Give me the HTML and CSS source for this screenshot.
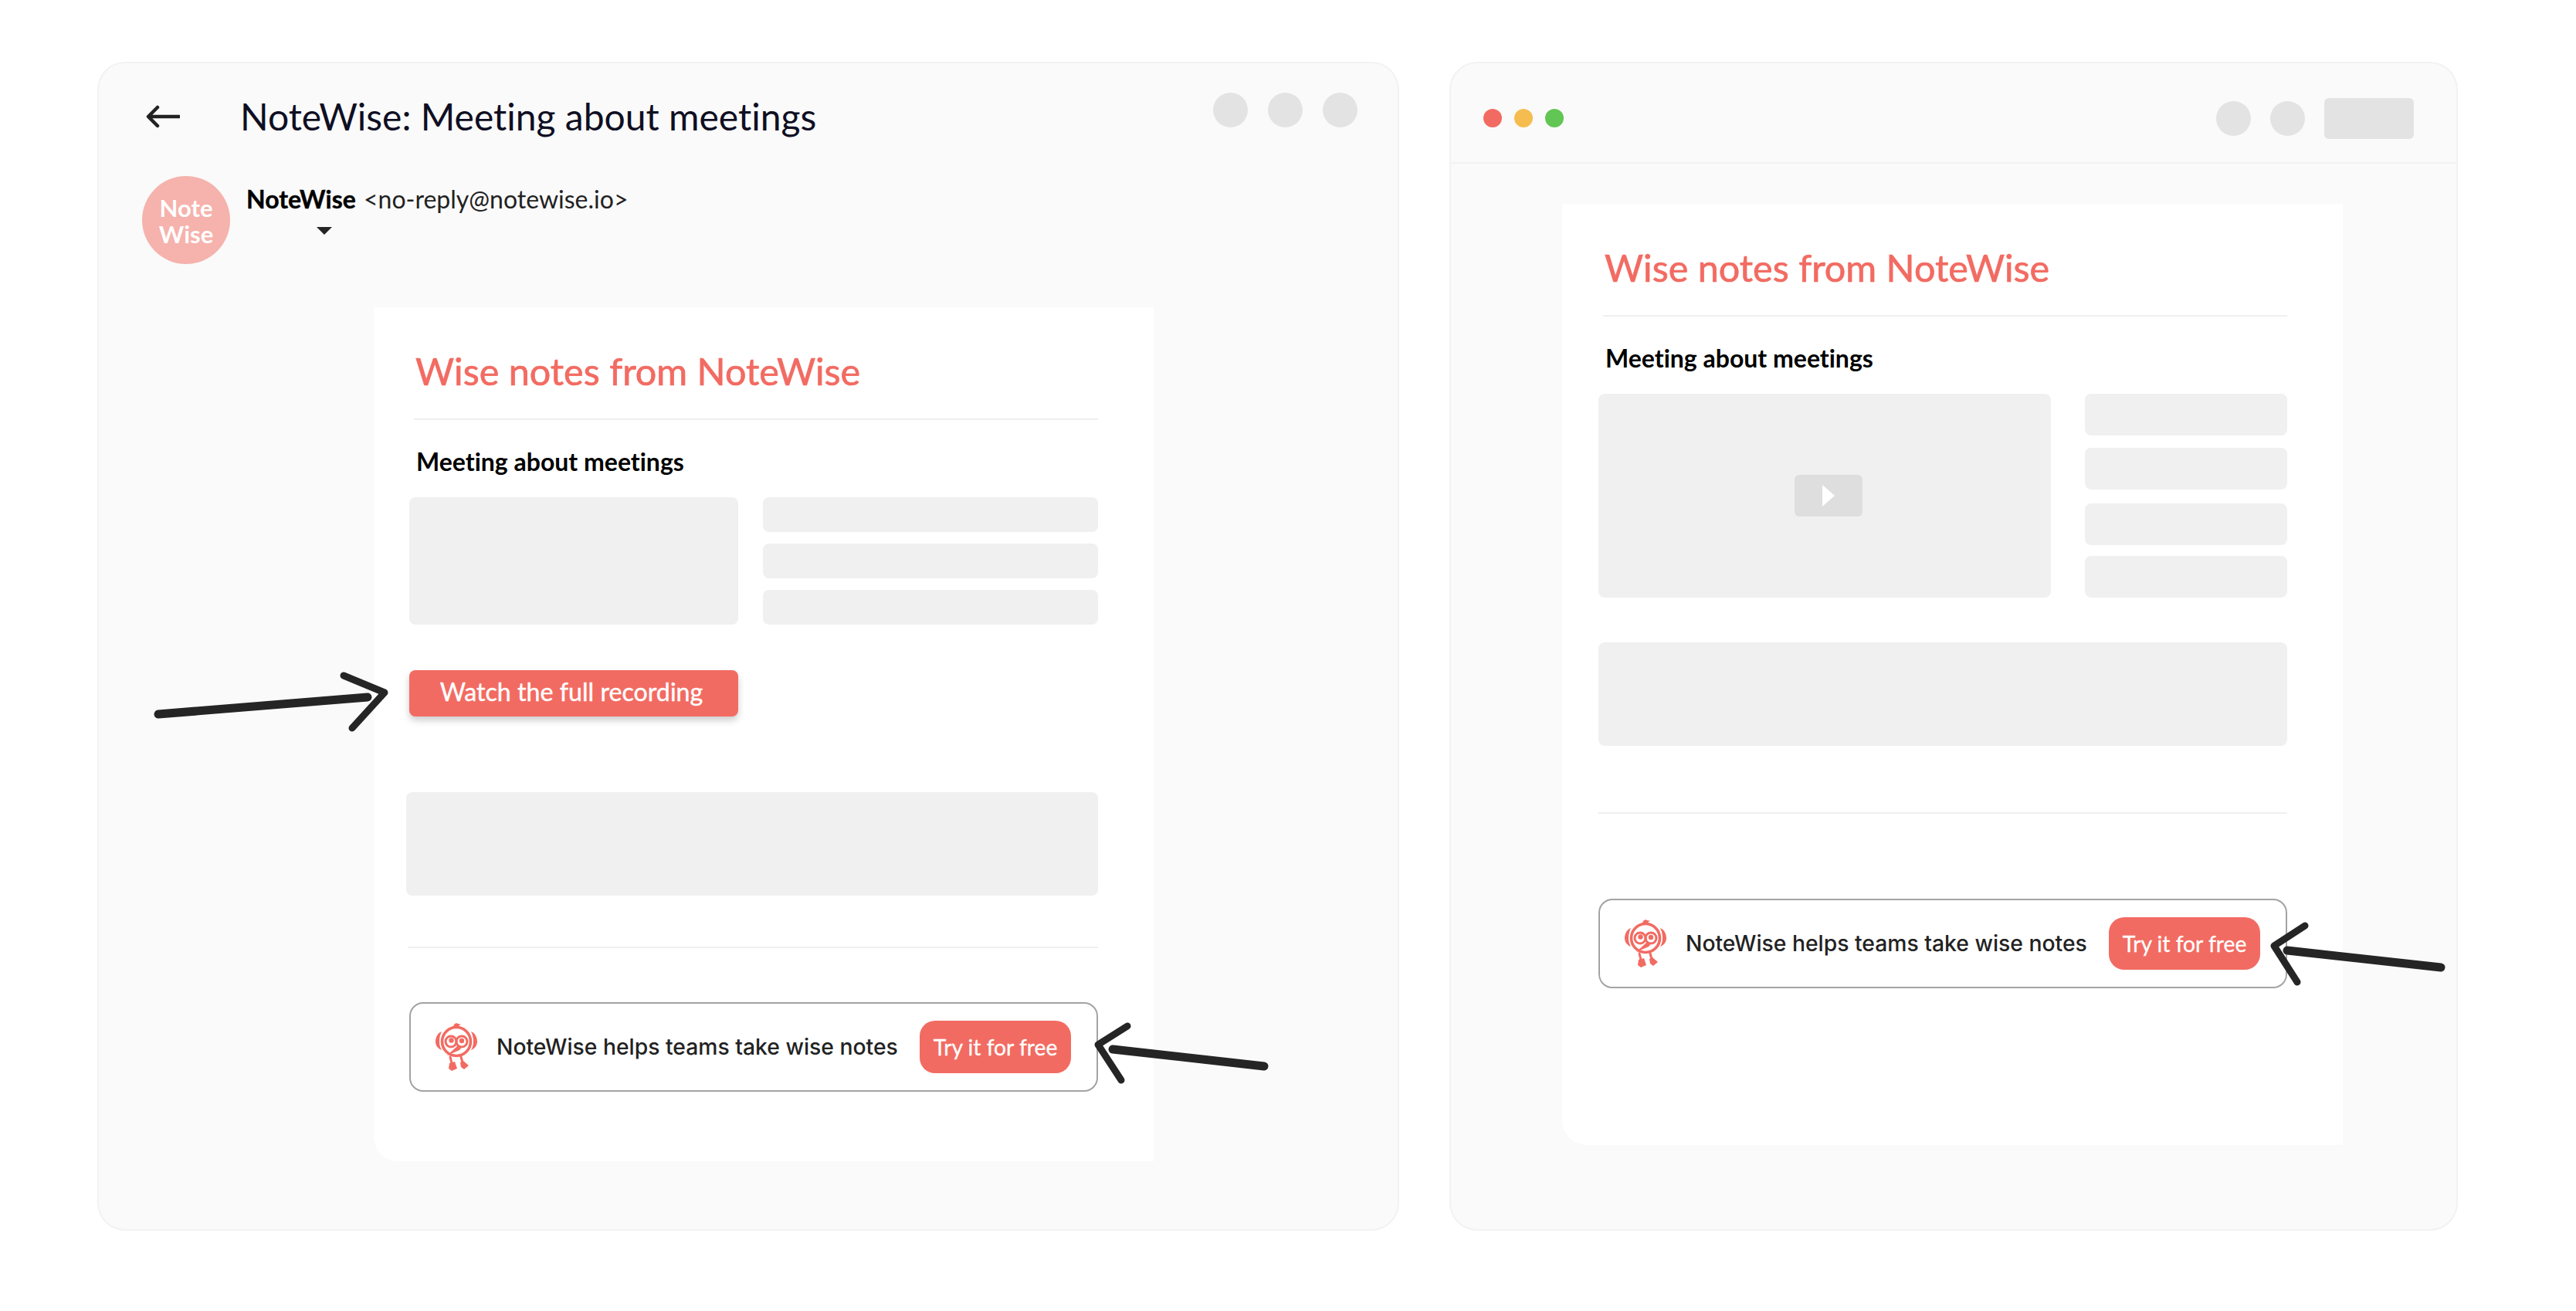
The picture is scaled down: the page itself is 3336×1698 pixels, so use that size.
FILE: index.html
```html
<!doctype html>
<html lang="en">
<head>
    <meta charset="UTF-8">
    <link rel="stylesheet" href="styles.css">
    <title>NoteWise</title>
</head>
<body>
<div class="window window-mail">
    <div class="mail-top">
        <svg class="back" width="44" height="30" viewBox="0 0 44 30">
            <path d="M43 15H4M15 3L3 15l12 12" fill="none" stroke="#222" stroke-width="4.5" stroke-linecap="round" stroke-linejoin="round"/>
        </svg>
        <h1 class="mail-title">NoteWise: Meeting about meetings</h1>
        <div class="mail-dots">
            <span class="dot"></span>
            <span class="dot"></span>
            <span class="dot"></span>
        </div>
    </div>
    <div class="sender">
        <div class="avatar">Note<br>Wise</div>
        <div class="sender-info">
            <div class="sender-line"><b>NoteWise</b> &lt;no-reply@notewise.io&gt;</div>
            <div class="caret"></div>
        </div>
    </div>
    <div class="page page-mail">
        <h2 class="page-title">Wise notes from NoteWise</h2>
        <h3 class="page-sub">Meeting about meetings</h3>
        <div class="media media-mail">
            <div class="block video"></div>
            <div class="rows">
                <div class="block"></div>
                <div class="block"></div>
                <div class="block"></div>
            </div>
        </div>
        <div class="watch-row"><button class="watch">Watch the full recording</button></div>
        <div class="block long"></div>
        <div class="rule"></div>
        <div class="banner">
            <svg class="owl" width="54" height="62" viewBox="0 0 54 62">
                <use href="#owl-mark"/>
            </svg>
            <span class="banner-text">NoteWise helps teams take wise notes</span>
            <button class="try">Try it for free</button>
        </div>
    </div>
</div>

<div class="window window-app">
    <div class="app-bar">
        <div class="lights">
            <span class="light red"></span>
            <span class="light yellow"></span>
            <span class="light green"></span>
        </div>
        <div class="app-tools">
            <span class="dot"></span>
            <span class="dot"></span>
            <span class="tool-rect"></span>
        </div>
    </div>
    <div class="page page-app">
        <h2 class="page-title">Wise notes from NoteWise</h2>
        <h3 class="page-sub">Meeting about meetings</h3>
        <div class="media media-app">
            <div class="block video">
                <div class="play"><span class="play-tri"></span></div>
            </div>
            <div class="rows">
                <div class="block"></div>
                <div class="block"></div>
                <div class="block"></div>
                <div class="block"></div>
            </div>
        </div>
        <div class="block long"></div>
        <div class="rule"></div>
        <div class="banner">
            <svg class="owl" width="54" height="62" viewBox="0 0 54 62">
                <use href="#owl-mark"/>
            </svg>
            <span class="banner-text">NoteWise helps teams take wise notes</span>
            <button class="try">Try it for free</button>
        </div>
    </div>
</div>

<svg class="defs" width="0" height="0">
    <g id="owl-mark" fill="none" stroke="#f26b62" stroke-linecap="round" stroke-linejoin="round">
        <circle cx="27" cy="24" r="18.5" stroke-width="3.6"/>
        <path d="M8 11C2 13 0 20 0 24c0 5 3 9 8 11-2-3-3-7-3-11 0-5 1-9 3-13zM46 11c6 2 8 9 8 13 0 5-3 9-8 11 2-3 3-7 3-11 0-5-1-9-3-13z" fill="#f26b62" stroke="none"/>
        <path d="M23 6c0-3 1-5 4-6 1 1 3 1 7 2-3 0-4 1-4 4z" fill="#f26b62" stroke="none"/>
        <circle cx="20" cy="24" r="7" stroke-width="3"/>
        <circle cx="34" cy="24" r="7" stroke-width="3"/>
        <circle cx="20.5" cy="22.5" r="3.2" fill="#f26b62" stroke="none"/>
        <circle cx="34" cy="23" r="3.2" fill="#f26b62" stroke="none"/>
        <path d="M15 42L28 30c2-1 5-1 5 1 0 3-2 4-4 5z" fill="#f26b62" stroke="none"/>
        <path d="M19 44l2 8M33 44l2 7" stroke-width="3"/>
        <path d="M18 52l7-2 3 9-7 3-4-3zM32 51l4-2 7 6-6 5-4-3z" fill="#f26b62" stroke="none"/>
    </g>
</svg>

<svg class="arrows" width="3336" height="1698" viewBox="0 0 3336 1698">
    <g fill="none" stroke="#252525" stroke-linecap="round" stroke-linejoin="round">
        <path d="M205 925L476 903" stroke-width="11"/>
        <path d="M445 875L498 897L456 943" stroke-width="9"/>
        <path d="M1441 1359L1637 1381" stroke-width="11"/>
        <path d="M1460 1329L1422 1353L1452 1399" stroke-width="9"/>
        <path d="M2962 1231L3161 1253" stroke-width="11"/>
        <path d="M2985 1199L2945 1225L2975 1272" stroke-width="9"/>
    </g>
</svg>
</body>
</html>
```
FILE: styles.css
```css
* {
    box-sizing: border-box;
}

body {
    display: flex;
    align-items: flex-start;
    gap: 65px;
    margin: 0;
    padding: 80px 0 0 126px;
    width: 3336px;
    height: 1698px;
    overflow: hidden;
    background-color: #fff;
    font-family: Lato, sans-serif;
    font-variant-ligatures: none;
    position: relative;
}

h1, h2, h3 {
    margin: 0;
    font-weight: 400;
}

button {
    border: none;
    color: #fff;
    font-family: Lato, sans-serif;
    font-variant-ligatures: none;
}

.window {
    height: 1514px;
    background-color: #fafafa;
    border: 2px solid #f2f2f2;
    border-radius: 36px;
}

.window-mail {
    width: 1686px;
}

.window-app {
    width: 1306px;
}

.mail-top {
    display: flex;
    align-items: center;
    height: 96px;
    padding: 41px 52px 0 61px;
}

.back {
    flex-shrink: 0;
}

.mail-title {
    margin-left: 78px;
    font-size: 48px;
    color: #0f0f23;
}

.mail-dots {
    display: flex;
    gap: 26px;
    margin-left: auto;
    margin-top: -16px;
}

.dot {
    display: block;
    width: 45px;
    height: 45px;
    border-radius: 50%;
    background-color: #e3e3e3;
}

.sender {
    display: flex;
    align-items: flex-start;
    margin: 50px 0 0 56px;
}

.avatar {
    width: 114px;
    height: 114px;
    padding-top: 24px;
    border-radius: 50%;
    background-color: #f6b2ac;
    color: #fff;
    font-size: 31px;
    font-weight: 700;
    line-height: 34px;
    text-align: center;
}

.sender-info {
    margin: 10px 0 0 21px;
}

.sender-line {
    font-size: 32px;
    line-height: 40px;
    color: #222;
}

.sender-line b {
    margin-right: 2px;
    color: #000;
    -webkit-text-stroke: .4px #000;
}

.caret {
    width: 0;
    height: 0;
    margin: 16px 0 0 91px;
    border-left: 10px solid transparent;
    border-right: 10px solid transparent;
    border-top: 10px solid #252525;
}

.page {
    background-color: #fff;
    border-radius: 0 0 0 32px;
}

.page-mail {
    width: 1010px;
    height: 1106px;
    margin: 56px 0 0 356px;
    padding: 51px 72px 0 46px;
}

.page-app {
    width: 1011px;
    height: 1219px;
    margin: 52px 0 0 144px;
    padding: 51px 72px 0 47px;
}

/* no medium cut of Lato here, a thin stroke brings the weight up */
.page-title {
    margin-left: 6px;
    padding: 0 0 31px 2px;
    font-size: 48.5px;
    line-height: 62px;
    color: #f26b62;
    -webkit-text-stroke: .7px #f26b62;
    border-bottom: 2px solid #efefef;
}

.page-sub {
    padding: 33px 0 0 9px;
    font-size: 32px;
    line-height: 42px;
    font-weight: 700;
    color: #000;
    white-space: nowrap;
}

.block {
    background-color: #f0f0f0;
    border-radius: 8px;
}

.media {
    display: flex;
    margin-top: 25px;
}

.media-mail {
    gap: 32px;
    height: 165px;
}

.media-mail .video {
    width: 426px;
}

.media-app {
    gap: 44px;
    height: 264px;
}

.media-app .video {
    display: flex;
    justify-content: center;
    align-items: center;
    width: 586px;
}

.rows {
    display: flex;
    flex: 1;
    flex-direction: column;
    justify-content: space-between;
}

.rows .block {
    height: 45px;
}

.media-app .rows .block {
    height: 54px;
}

/* the third row sits a little low in the reference */
.media-app .rows .block:nth-child(3) {
    margin-top: 2px;
    margin-bottom: -2px;
}

.play {
    display: flex;
    justify-content: center;
    align-items: center;
    width: 88px;
    height: 54px;
    margin-left: 10px;
    border-radius: 6px;
    background-color: #dedede;
}

.play-tri {
    width: 0;
    height: 0;
    border-top: 14px solid transparent;
    border-bottom: 14px solid transparent;
    border-left: 16px solid #fff;
}

.watch-row {
    margin-top: 59px;
}

.watch {
    display: block;
    width: 426px;
    height: 60px;
    padding: 0 6px 5px 0;
    border-radius: 8px;
    background-color: #f26b62;
    font-size: 32.2px;
    -webkit-text-stroke: .4px #fff;
    box-shadow: 0 5px 10px rgba(0, 0, 0, .2);
}

.long {
    height: 134px;
}

.page-mail .long {
    margin: 98px 0 0 -4px;
}

.page-app .long {
    margin-top: 58px;
}

.rule {
    height: 2px;
    background-color: #efefef;
}

.page-mail .rule {
    margin: 66px 0 0 -2px;
}

.page-app .rule {
    margin-top: 86px;
}

.banner {
    display: flex;
    align-items: center;
    height: 116px;
    padding: 0 33px 0 32px;
    border: 2px solid #a3a3a3;
    border-radius: 18px;
}

.page-mail .banner {
    margin-top: 70px;
}

.page-app .banner {
    margin-top: 110px;
}

.owl {
    flex-shrink: 0;
}

.banner-text {
    margin-left: 25px;
    font-family: Inter, sans-serif;
    font-size: 28.3px;
    font-weight: 500;
    color: #222;
    white-space: nowrap;
}

.try {
    width: 196px;
    height: 68px;
    margin-left: auto;
    border-radius: 20px;
    background-color: #f26b62;
    font-size: 28.2px;
    -webkit-text-stroke: .3px #fff;
}

.app-bar {
    display: flex;
    justify-content: space-between;
    align-items: center;
    height: 130px;
    padding: 14px 55px 0 42px;
    border-bottom: 2px solid #f2f2f2;
}

.lights {
    display: flex;
    gap: 16px;
}

.light {
    display: block;
    width: 24px;
    height: 24px;
    border-radius: 50%;
}

.red {
    background-color: #f26b62;
}

.yellow {
    background-color: #f5bd50;
}

.green {
    background-color: #61c653;
}

.app-tools {
    display: flex;
    align-items: center;
    gap: 25px;
}

.tool-rect {
    display: block;
    width: 116px;
    height: 53px;
    border-radius: 6px;
    background-color: #e3e3e3;
}

.defs {
    position: absolute;
}

/* hand drawn arrows sit on top of both windows */
.arrows {
    position: absolute;
    top: 0;
    left: 0;
    pointer-events: none;
}
```
